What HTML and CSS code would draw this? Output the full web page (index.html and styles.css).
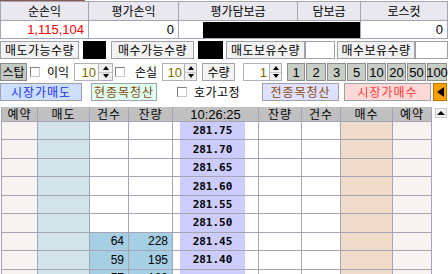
FILE: index.html
```html
<!DOCTYPE html>
<html lang="ko">
<head>
<meta charset="utf-8">
<link rel="stylesheet" href="styles.css">
</head>
<body>
<div class="page">
  <div class="top-line"></div>
  <div class="summary">
    <div class="sh">순손익</div>
    <div class="sh">평가손익</div>
    <div class="sh">평가담보금</div>
    <div class="sh">담보금</div>
    <div class="sh">로스컷</div>
    <div class="sv red num">1,115,104</div>
    <div class="sv num">0</div>
    <div class="sv span2"><div class="blackfill"></div></div>
    <div class="sv num">0</div>
  </div>

  <div class="row qty-row">
    <div class="btn lbl w79">매도가능수량</div>
    <div class="blk b1"></div>
    <div class="btn lbl w83 ml5">매수가능수량</div>
    <div class="blk b2"></div>
    <div class="btn lbl w79 ml3">매도보유수량</div>
    <div class="emptybox e1"></div>
    <div class="btn lbl w78 ml2">매수보유수량</div>
    <div class="emptybox e2"></div>
  </div>

  <div class="row ctrl-row">
    <div class="btn stop">스탑</div>
    <span class="chk ml3"></span>
    <span class="txt t-ik">이익</span>
    <div class="spin s1"><span class="spin-val">10</span><span class="arrows"><span class="up"></span><span class="down"></span></span></div>
    <span class="chk ml2"></span>
    <span class="txt t-ss">손실</span>
    <div class="spin s2"><span class="spin-val">10</span><span class="arrows"><span class="up"></span><span class="down"></span></span></div>
    <div class="btn qty">수량</div>
    <div class="spin s3"><span class="spin-val">1</span><span class="arrows"><span class="up"></span><span class="down"></span></span></div>
    <div class="nums">
      <div class="nb">1</div><div class="nb">2</div><div class="nb">3</div><div class="nb">5</div>
      <div class="nb">10</div><div class="nb">20</div><div class="nb">50</div><div class="nb">100</div>
    </div>
  </div>

  <div class="row action-row">
    <div class="abtn sell">시장가매도</div>
    <div class="abtn clear1">현종목청산</div>
    <span class="chk c-fix"></span>
    <span class="txt t-fix">호가고정</span>
    <div class="abtn clear2">전종목청산</div>
    <div class="abtn buy">시장가매수</div>
    <div class="abtn arrowbtn"><span class="tri-left"></span></div>
  </div>

  <div class="book">
    <div class="grid">
      <div class="gh">예약</div><div class="gh">매도</div><div class="gh">건수</div><div class="gh">잔량</div><div class="gh time">10:26:25</div><div class="gh">잔량</div><div class="gh">건수</div><div class="gh">매수</div><div class="gh">예약</div>

      <div class="c rsv"></div><div class="c sellc"></div><div class="c"></div><div class="c"></div><div class="c pc"><span class="price">281.75</span></div><div class="c"></div><div class="c"></div><div class="c buyc"></div><div class="c rsv"></div>
      <div class="c rsv"></div><div class="c sellc"></div><div class="c"></div><div class="c"></div><div class="c pc"><span class="price">281.70</span></div><div class="c"></div><div class="c"></div><div class="c buyc"></div><div class="c rsv"></div>
      <div class="c rsv"></div><div class="c sellc"></div><div class="c"></div><div class="c"></div><div class="c pc"><span class="price">281.65</span></div><div class="c"></div><div class="c"></div><div class="c buyc"></div><div class="c rsv"></div>
      <div class="c rsv"></div><div class="c sellc"></div><div class="c"></div><div class="c"></div><div class="c pc"><span class="price">281.60</span></div><div class="c"></div><div class="c"></div><div class="c buyc"></div><div class="c rsv"></div>
      <div class="c rsv"></div><div class="c sellc"></div><div class="c"></div><div class="c"></div><div class="c pc"><span class="price">281.55</span></div><div class="c"></div><div class="c"></div><div class="c buyc"></div><div class="c rsv"></div>
      <div class="c rsv"></div><div class="c sellc"></div><div class="c"></div><div class="c"></div><div class="c pc"><span class="price">281.50</span></div><div class="c"></div><div class="c"></div><div class="c buyc"></div><div class="c rsv"></div>
      <div class="c rsv"></div><div class="c sellc"></div><div class="c hl">64</div><div class="c hl">228</div><div class="c pc"><span class="price">281.45</span></div><div class="c"></div><div class="c"></div><div class="c buyc"></div><div class="c rsv"></div>
      <div class="c rsv"></div><div class="c sellc"></div><div class="c hl">59</div><div class="c hl">195</div><div class="c pc"><span class="price">281.40</span></div><div class="c"></div><div class="c"></div><div class="c buyc"></div><div class="c rsv"></div>
      <div class="c rsv"></div><div class="c sellc"></div><div class="c hl">57</div><div class="c hl">180</div><div class="c pc"><span class="price">281.35</span></div><div class="c"></div><div class="c"></div><div class="c buyc"></div><div class="c rsv"></div>
    </div>
    <div class="scroll"><div class="scroll-up"><span class="tri-up"></span></div></div>
  </div>
</div>
</body>
</html>
```

FILE: styles.css
```css
* { box-sizing: border-box; }
html, body { margin: 0; padding: 0; background: #ffffff; }
body {
  width: 448px;
  height: 274px;
  overflow: hidden;
  font-family: "Noto Sans CJK KR", "Noto Sans", sans-serif;
  font-size: 12px;
  color: #000;
}
.page { width: 448px; }

.top-line { width: 85px; height: 1px; background: #8a5a4a; }

.summary {
  display: grid;
  grid-template-columns: 87px 89px 118px 62px 86px;
  grid-template-rows: 18px 17px;
  gap: 1px;
  padding: 1px;
  background: #a4a4b4;
  width: 448px;
}
.sh {
  background: #e8e8ee;
  display: flex; align-items: center; justify-content: center;
  line-height: 1;
}
.sv {
  background: #fff;
  display: flex; align-items: center; justify-content: flex-end;
  padding-right: 4px;
}
.sv.span2 { grid-column: span 2; padding: 1px 0 0 24px; justify-content: stretch; align-items: stretch; }
.blackfill { flex: 1; background: #000; }
.num { font-family: "Liberation Sans Narrow", "Liberation Sans", sans-serif; font-size: 13px; }
.red { color: #ff0000; }

.row { display: flex; align-items: center; }
.qty-row { margin-top: 2px; height: 18px; }
.btn {
  height: 18px;
  border: 1px solid #a0a0a8;
  background: #f2f2f2;
  display: flex; align-items: center; justify-content: center;
  line-height: 1;
  white-space: nowrap;
}
.lbl { letter-spacing: 0.5px; }
.w79 { width: 79px; }
.w83 { width: 83px; }
.w78 { width: 78px; }
.ml5 { margin-left: 5px; }
.ml3 { margin-left: 3px; }
.ml2 { margin-left: 2px; }
.blk { height: 18px; background: #000; }
.b1 { width: 23px; margin-left: 4px; }
.b2 { width: 25px; margin-left: 4px; }
.emptybox { height: 18px; border: 1px solid #a0a0a8; background: #fff; }
.e1 { width: 30px; }
.e2 { width: 33px; }

.ctrl-row { margin-top: 4px; height: 18px; }
.stop { width: 27px; background: #c3cbc3; border-color: #8a8a8a; }
.chk {
  display: inline-block; width: 10px; height: 10px; flex: none;
  border: 1px solid #808080; border-right-color: #c8c8c8; border-bottom-color: #c8c8c8;
  background: #fff;
}
.txt { line-height: 1; white-space: nowrap; flex: none; }
.t-ik { margin-left: 7px; width: 27px; }
.spin { display: flex; height: 18px; flex: none; }
.spin-val {
  border: 1px solid #b0b0b8;
  background: #fff;
  color: #7a6a00;
  display: flex; align-items: center; justify-content: flex-end;
  padding-right: 2px;
  font-family: "Liberation Sans Narrow", "Liberation Sans", sans-serif;
  font-size: 13px;
}
.s1 .spin-val { width: 25px; }
.s2 .spin-val { width: 23px; }
.s3 .spin-val { width: 27px; }
.arrows { display: flex; flex-direction: column; width: 12px; border: 1px solid #b0b0b8; border-left: 0; background: #f0f0f0; }
.s1 .arrows { width: 14px; }
.arrows span { flex: 1; display: flex; align-items: center; justify-content: center; }
.arrows span + span { border-top: 1px solid #c8c8c8; }
.up::before { content: ""; border-left: 3px solid transparent; border-right: 3px solid transparent; border-bottom: 4px solid #000; }
.down::before { content: ""; border-left: 3px solid transparent; border-right: 3px solid transparent; border-top: 4px solid #000; }
.s2 { margin-left: 5px; }
.t-ss { margin-left: 10px; width: 22px; }
.qty { width: 33px; margin-left: 5px; background: #f4f4f4; flex: none; }
.s3 { margin-left: 8px; }
.nums { display: flex; gap: 1px; margin-left: 5px; }
.nb {
  width: 19px; height: 18px; flex: none;
  background: #c6cec6;
  border: 1px solid #8c8c8c;
  display: flex; align-items: center; justify-content: center;
  font-family: "Liberation Sans Narrow", "Liberation Sans", sans-serif;
  font-size: 13px;
  line-height: 1;
}
.nb:first-child { width: 18px; }
.nb:nth-child(2) { width: 20px; }
.nb:last-child { width: 20px; }

.action-row { margin-top: 2px; height: 18px; }
.abtn {
  height: 18px; flex: none;
  border: 1px solid #a0a0a8;
  display: flex; align-items: center; justify-content: center;
  line-height: 1; letter-spacing: 1px; white-space: nowrap;
}
.sell { width: 82px; background: #cddfff; color: #1a30ff; }
.clear1 { width: 66px; margin-left: 9px; background: #dcfff0; color: #8a4a10; }
.c-fix { margin-left: 20px; }
.t-fix { margin-left: 7px; letter-spacing: 0.5px; width: 68px; }
.clear2 { width: 77px; background: #e0e0ff; color: #8a4a10; }
.buy { width: 87px; margin-left: 5px; background: #ffd8d8; color: #ff3838; }
.arrowbtn { width: 14px; margin-left: 2px; background: #ffa200; border-color: #c07000; }
.tri-left { display: block; border-top: 5px solid transparent; border-bottom: 5px solid transparent; border-right: 7px solid #000; }

.book { display: flex; margin-top: 6px; }
.grid {
  display: grid;
  grid-template-columns: 35px 51px 38px 43px 85px 42px 38px 51px 38px;
  grid-template-rows: 14px repeat(9, 17.45px);
  gap: 1px;
  padding: 0 0 1px 1px;
  background: #a4a4b4;
  margin-left: 1px;
  border-right: 1px solid #a4a4b4;
}
.gh {
  background: #c0c0c0;
  display: flex; align-items: center; justify-content: center;
  line-height: 1; letter-spacing: 1px;
}
.gh.time { letter-spacing: 0; font-family: "Liberation Sans Narrow", "Liberation Sans", sans-serif; font-size: 13px; }
.c {
  background: #fff;
  display: flex; align-items: center; justify-content: flex-end;
  padding-right: 4px;
  font-family: "Liberation Sans", sans-serif;
  font-size: 12px;
}
.rsv { background: #f6f3f0; }
.sellc { background: #d3e3ea; }
.buyc { background: #f0dccb; }
.hl { background: #a4cfe4; }
.pc { justify-content: flex-start; padding: 0 0 0 7px; }
.price {
  width: 65px; height: 100%;
  background: #ccccff;
  display: flex; align-items: center; justify-content: center;
  font-family: "DejaVu Sans Mono", monospace;
  font-weight: bold; font-size: 11px;
}
.scroll { width: 16px; background: #fff; padding: 1px 0 0 3px; }
.scroll-up {
  width: 12px; height: 10px;
  border: 1px solid #c8c8c8;
  background: #f4f4f4;
  display: flex; align-items: center; justify-content: center;
}
.tri-up { display: block; border-left: 4px solid transparent; border-right: 4px solid transparent; border-bottom: 4px solid #000; }
```
